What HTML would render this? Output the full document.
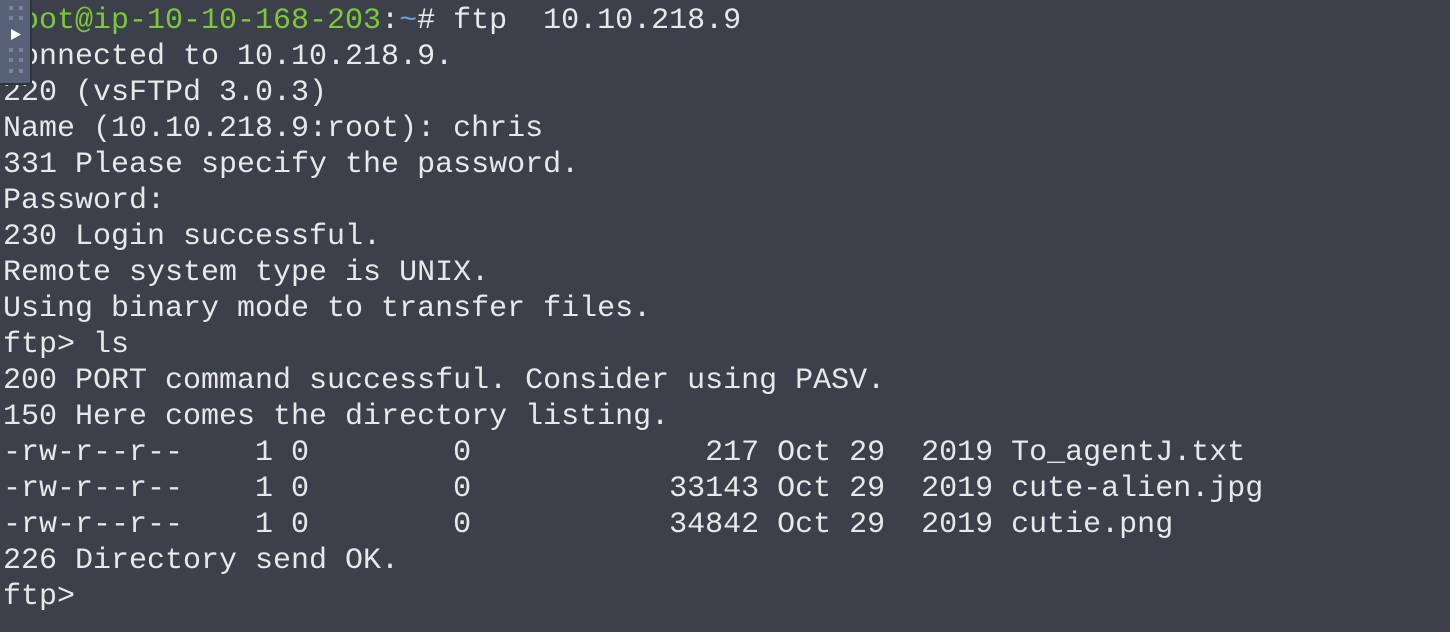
<!DOCTYPE html>
<html><head><meta charset="utf-8"><style>
html,body{margin:0;padding:0;width:1450px;height:632px;overflow:hidden;background:#3c404b;}
pre{margin:0;position:absolute;left:3px;top:3px;font-family:"Liberation Mono","DejaVu Sans Mono",monospace;font-size:30px;line-height:36px;color:#e8e8e8;white-space:pre;}
.g{color:#7cc83a}.b{color:#6c9fe0}
#panel{position:absolute;left:0;top:0;width:30px;height:83px;background:#576177;border-right:2px solid #2e323b;border-bottom:2px solid #2e323b;border-radius:0 0 3px 0;}
.d{position:absolute;width:4px;height:4px;background:#7a8397;}
</style></head><body>
<pre><span class="g">root@ip-10-10-168-203</span>:<span class="b">~</span># ftp  10.10.218.9
Connected to 10.10.218.9.
220 (vsFTPd 3.0.3)
Name (10.10.218.9:root): chris
331 Please specify the password.
Password:
230 Login successful.
Remote system type is UNIX.
Using binary mode to transfer files.
ftp&gt; ls
200 PORT command successful. Consider using PASV.
150 Here comes the directory listing.
-rw-r--r--    1 0        0             217 Oct 29  2019 To_agentJ.txt
-rw-r--r--    1 0        0           33143 Oct 29  2019 cute-alien.jpg
-rw-r--r--    1 0        0           34842 Oct 29  2019 cutie.png
226 Directory send OK.
ftp&gt;</pre>
<div id="panel">
<div class="d" style="left:9px;top:6px"></div><div class="d" style="left:19px;top:6px"></div>
<div class="d" style="left:9px;top:16px"></div><div class="d" style="left:19px;top:16px"></div>
<svg style="position:absolute;left:10px;top:28px" width="12" height="13"><path d="M1 1 L11 6.5 L1 12 Z" fill="#fff"/></svg>
<div class="d" style="left:9px;top:48px"></div><div class="d" style="left:19px;top:48px"></div>
<div class="d" style="left:9px;top:58px"></div><div class="d" style="left:19px;top:58px"></div>
<div class="d" style="left:9px;top:69px"></div><div class="d" style="left:19px;top:69px"></div>
</div>
</body></html>
